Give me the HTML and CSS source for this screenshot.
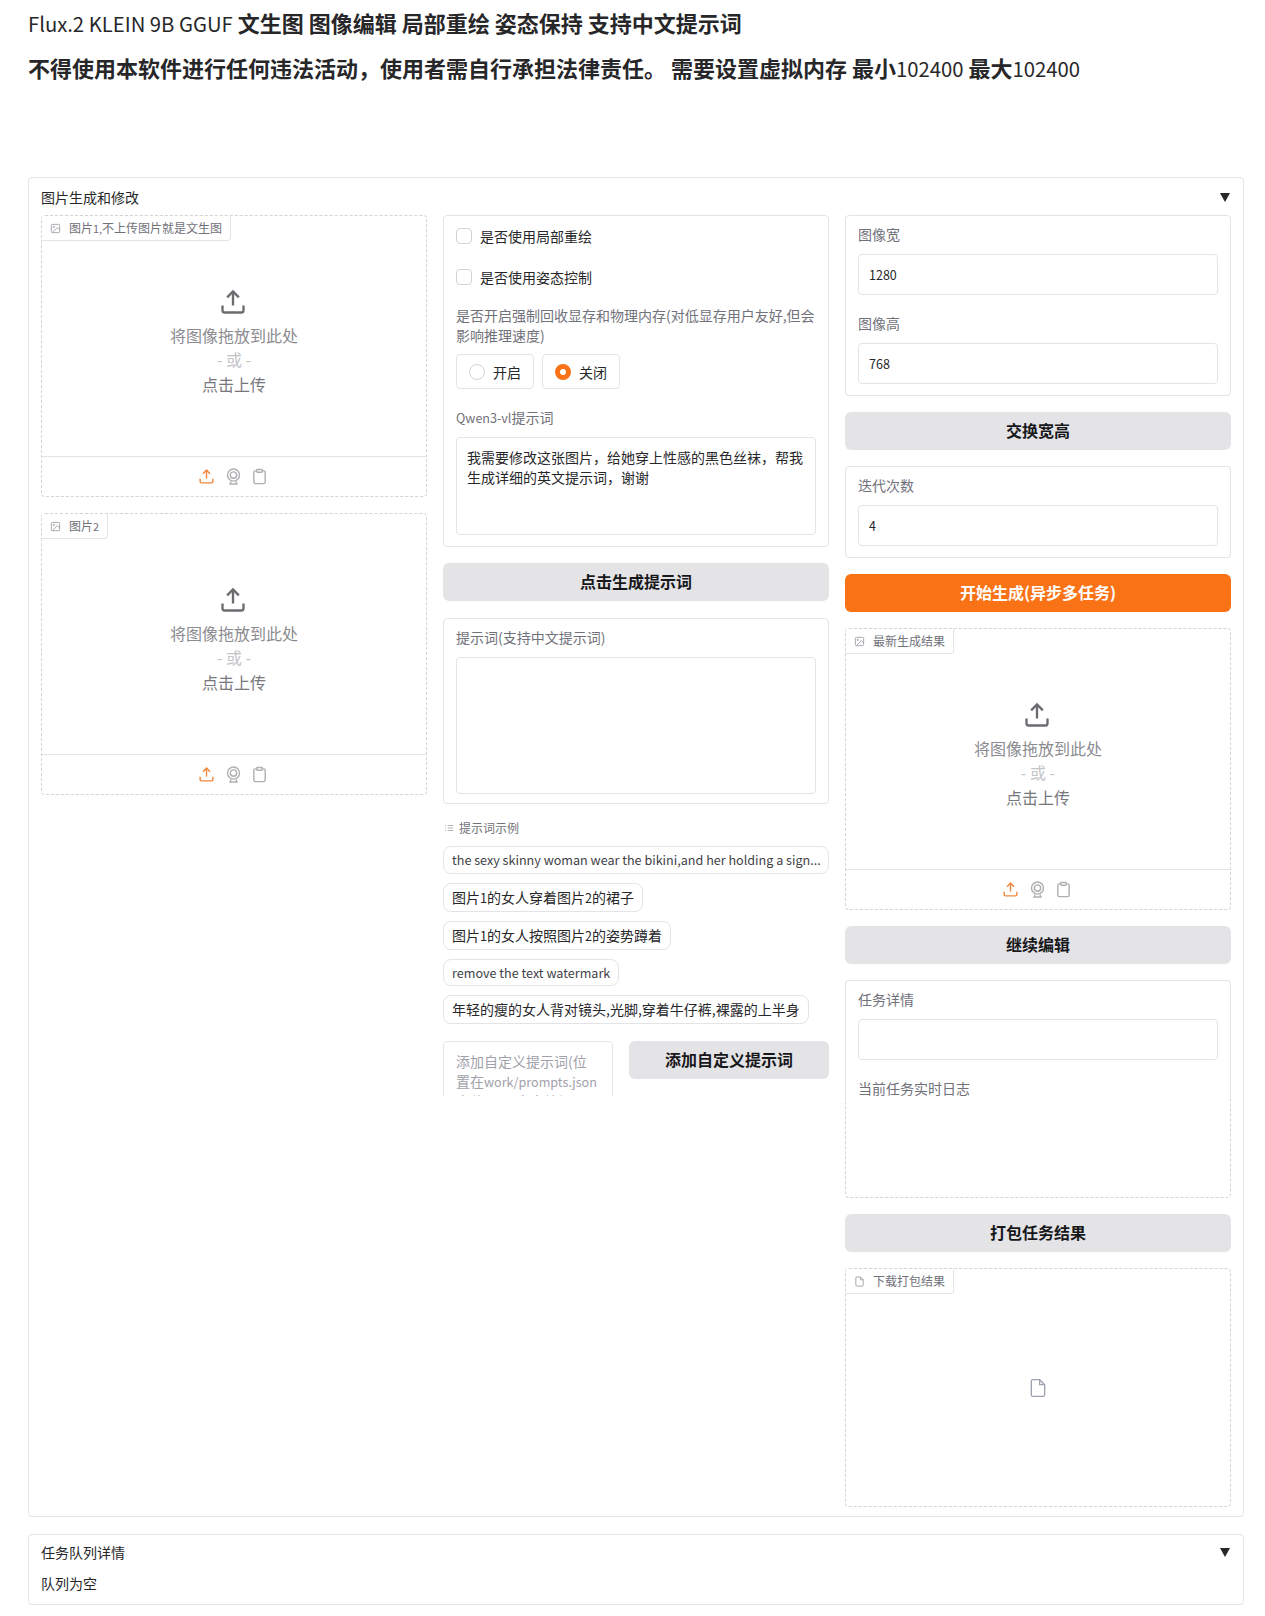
FILE: index.html
```html
<!DOCTYPE html>
<html lang="zh-CN">
<head>
  <meta charset="UTF-8" />
  <title>Flux.2 KLEIN 9B GGUF</title>
  <link rel="stylesheet" href="styles.css">
</head>
<body>

  <h2 class="title"><span class="plain">Flux.2 KLEIN 9B GGUF</span> 文生图 图像编辑 局部重绘 姿态保持 支持中文提示词</h2>
  <h2 class="title">不得使用本软件进行任何违法活动，使用者需自行承担法律责任。 需要设置虚拟内存 最小<span class="plain">102400</span> 最大<span class="plain">102400</span></h2>

  <section class="accordion main">
    <div class="accordion-head"><span>图片生成和修改</span><span class="arrow"></span></div>

    <div class="columns">
      <div class="column">
        <div class="upload">
          <div class="tab">
            <svg class="tab-icon" viewBox="0 0 24 24"><rect x="3" y="3" width="18" height="18" rx="2"/><circle cx="8.5" cy="8.5" r="1.5"/><path d="M21 15l-5-5L5 21"/></svg>
            <span>图片<span class="lat">1,</span>不上传图片就是文生图</span>
          </div>
          <div class="drop">
            <svg class="drop-icon" viewBox="0 0 24 24"><path d="M21 15v4a2 2 0 0 1-2 2H5a2 2 0 0 1-2-2v-4"/><path d="M17 8l-5-5-5 5"/><path d="M12 3v12"/></svg>
            <div class="drop-text">将图像拖放到此处</div>
            <div class="drop-or">- 或 -</div>
            <div class="drop-click">点击上传</div>
          </div>
          <div class="toolbar">
            <svg class="tool active" viewBox="0 0 24 24"><path d="M21 15v4a2 2 0 0 1-2 2H5a2 2 0 0 1-2-2v-4"/><path d="M17 8l-5-5-5 5"/><path d="M12 3v12"/></svg>
            <svg class="tool" viewBox="0 0 24 24"><circle cx="12" cy="10" r="8.5"/><circle cx="12" cy="10" r="4.5"/><path d="M6 22.5h12M8 19v3.5M16 19v3.5"/></svg>
            <svg class="tool" viewBox="0 0 24 24"><path d="M16 4h2a2 2 0 0 1 2 2v14a2 2 0 0 1-2 2H6a2 2 0 0 1-2-2V6a2 2 0 0 1 2-2h2"/><rect x="8" y="2" width="8" height="4" rx="1"/></svg>
          </div>
        </div>

        <div class="upload">
          <div class="tab">
            <svg class="tab-icon" viewBox="0 0 24 24"><rect x="3" y="3" width="18" height="18" rx="2"/><circle cx="8.5" cy="8.5" r="1.5"/><path d="M21 15l-5-5L5 21"/></svg>
            <span>图片<span class="lat">2</span></span>
          </div>
          <div class="drop">
            <svg class="drop-icon" viewBox="0 0 24 24"><path d="M21 15v4a2 2 0 0 1-2 2H5a2 2 0 0 1-2-2v-4"/><path d="M17 8l-5-5-5 5"/><path d="M12 3v12"/></svg>
            <div class="drop-text">将图像拖放到此处</div>
            <div class="drop-or">- 或 -</div>
            <div class="drop-click">点击上传</div>
          </div>
          <div class="toolbar">
            <svg class="tool active" viewBox="0 0 24 24"><path d="M21 15v4a2 2 0 0 1-2 2H5a2 2 0 0 1-2-2v-4"/><path d="M17 8l-5-5-5 5"/><path d="M12 3v12"/></svg>
            <svg class="tool" viewBox="0 0 24 24"><circle cx="12" cy="10" r="8.5"/><circle cx="12" cy="10" r="4.5"/><path d="M6 22.5h12M8 19v3.5M16 19v3.5"/></svg>
            <svg class="tool" viewBox="0 0 24 24"><path d="M16 4h2a2 2 0 0 1 2 2v14a2 2 0 0 1-2 2H6a2 2 0 0 1-2-2V6a2 2 0 0 1 2-2h2"/><rect x="8" y="2" width="8" height="4" rx="1"/></svg>
          </div>
        </div>
      </div>

      <div class="column">
        <div class="card">
          <label class="check"><span class="box"></span>是否使用局部重绘</label>
          <label class="check second"><span class="box"></span>是否使用姿态控制</label>
          <div class="label after-check">是否开启强制回收显存和物理内存(对低显存用户友好,但会影响推理速度)</div>
          <div class="radios">
            <label class="radio"><span class="dot"></span>开启</label>
            <label class="radio"><span class="dot on"></span>关闭</label>
          </div>
          <div class="label spaced"><span class="lat">Qwen3-vl</span>提示词</div>
          <textarea class="text-area short">我需要修改这张图片，给她穿上性感的黑色丝袜，帮我生成详细的英文提示词，谢谢</textarea>
        </div>

        <button class="btn">点击生成提示词</button>

        <div class="card prompt-card">
          <div class="label">提示词(支持中文提示词)</div>
          <textarea class="text-area tall"></textarea>
        </div>

        <div>
          <div class="examples-head">
            <svg class="list-icon" viewBox="0 0 24 24"><path d="M9 6h13M9 12h13M9 18h13M3 6h2M3 12h2M3 18h2"/></svg>
            提示词示例
          </div>
          <div class="pills">
            <div class="pill latin wide"><span class="lat">the sexy skinny woman wear the bikini,and her holding a sign...</span></div>
            <div class="pill">图片<span class="lat">1</span>的女人穿着图片<span class="lat">2</span>的裙子</div>
            <div class="pill">图片<span class="lat">1</span>的女人按照图片<span class="lat">2</span>的姿势蹲着</div>
            <div class="pill latin"><span class="lat">remove the text watermark</span></div>
            <div class="pill">年轻的瘦的女人背对镜头,光脚,穿着牛仔裤,裸露的上半身</div>
          </div>
        </div>

        <div class="add-row">
          <div class="clip">
            <div class="add-input">添加自定义提示词(位置在<span class="lat">work/prompts.json</span>文件,可以自由编辑)</div>
          </div>
          <button class="btn add-btn">添加自定义提示词</button>
        </div>
      </div>

      <div class="column">
        <div class="card">
          <div class="label">图像宽</div>
          <input class="field" type="text" value="1280" />
          <div class="label spaced">图像高</div>
          <input class="field" type="text" value="768" />
        </div>

        <button class="btn">交换宽高</button>

        <div class="card">
          <div class="label">迭代次数</div>
          <input class="field" type="text" value="4" />
        </div>

        <button class="btn primary">开始生成(异步多任务)</button>

        <div class="upload">
          <div class="tab">
            <svg class="tab-icon" viewBox="0 0 24 24"><rect x="3" y="3" width="18" height="18" rx="2"/><circle cx="8.5" cy="8.5" r="1.5"/><path d="M21 15l-5-5L5 21"/></svg>
            <span>最新生成结果</span>
          </div>
          <div class="drop">
            <svg class="drop-icon" viewBox="0 0 24 24"><path d="M21 15v4a2 2 0 0 1-2 2H5a2 2 0 0 1-2-2v-4"/><path d="M17 8l-5-5-5 5"/><path d="M12 3v12"/></svg>
            <div class="drop-text">将图像拖放到此处</div>
            <div class="drop-or">- 或 -</div>
            <div class="drop-click">点击上传</div>
          </div>
          <div class="toolbar">
            <svg class="tool active" viewBox="0 0 24 24"><path d="M21 15v4a2 2 0 0 1-2 2H5a2 2 0 0 1-2-2v-4"/><path d="M17 8l-5-5-5 5"/><path d="M12 3v12"/></svg>
            <svg class="tool" viewBox="0 0 24 24"><circle cx="12" cy="10" r="8.5"/><circle cx="12" cy="10" r="4.5"/><path d="M6 22.5h12M8 19v3.5M16 19v3.5"/></svg>
            <svg class="tool" viewBox="0 0 24 24"><path d="M16 4h2a2 2 0 0 1 2 2v14a2 2 0 0 1-2 2H6a2 2 0 0 1-2-2V6a2 2 0 0 1 2-2h2"/><rect x="8" y="2" width="8" height="4" rx="1"/></svg>
          </div>
        </div>

        <button class="btn">继续编辑</button>

        <div>
          <div class="status-top">
            <div class="label">任务详情</div>
            <input class="field" type="text" value="" />
            <div class="label spaced">当前任务实时日志</div>
          </div>
          <div class="status-log"></div>
        </div>

        <button class="btn">打包任务结果</button>

        <div class="upload file">
          <div class="tab">
            <svg class="tab-icon" viewBox="0 0 24 24"><path d="M14 2H6a2 2 0 0 0-2 2v16a2 2 0 0 0 2 2h12a2 2 0 0 0 2-2V8z"/><path d="M14 2v6h6"/></svg>
            <span>下载打包结果</span>
          </div>
          <svg class="file-icon" viewBox="0 0 24 24"><path d="M14 2H6a2 2 0 0 0-2 2v16a2 2 0 0 0 2 2h12a2 2 0 0 0 2-2V8z"/><path d="M14 2v6h6"/></svg>
        </div>
      </div>
    </div>
  </section>

  <section class="accordion queue">
    <div class="accordion-head"><span>任务队列详情</span><span class="arrow"></span></div>
    <div class="queue-text">队列为空</div>
  </section>

</body>
</html>
```

FILE: styles.css
```css
* {
  box-sizing: border-box;
}

body {
  margin: 0;
  padding: 6px 21px 11px 28px;
  background: #fff;
  color: #27272a;
  font-family: "Noto Sans CJK SC", "Noto Sans", sans-serif;
  font-size: 14px;
  line-height: 20px;
}

.title {
  margin: 0 0 12px;
  font-size: 22px;
  line-height: 33px;
  font-weight: 700;
}

.plain {
  font-size: 20.3px;
  font-weight: 400;
  line-height: 1;
}

/* latin runs are set a bit smaller than the cjk font's own latin */
.lat {
  font-size: 0.9em;
  line-height: 1;
}

.accordion {
  border: 1px solid #e4e4e7;
  border-radius: 4px;
  padding: 9px 12px;
}

.main {
  margin-top: 93px;
  height: 1340px;
}

.queue {
  margin-top: 17px;
  height: 71px;
  padding-top: 7px;
}

.accordion-head {
  display: flex;
  justify-content: space-between;
  align-items: center;
  height: 20px;
  line-height: 18px;
}

.arrow {
  width: 0;
  height: 0;
  margin-right: 1px;
  border-left: 5px solid transparent;
  border-right: 5px solid transparent;
  border-top: 9px solid #27272a;
}

.queue-text {
  margin-top: 11px;
}

.columns {
  display: grid;
  grid-template-columns: repeat(3, 1fr);
  gap: 16px;
  margin-top: 8px;
}

.column {
  display: flex;
  flex-direction: column;
  gap: 16px;
  min-width: 0;
}

.card {
  border: 1px solid #e4e4e7;
  border-radius: 4px;
  padding: 9px 12px 11px;
}

.prompt-card {
  margin-top: 1px;
  padding-bottom: 9px;
}

.status-top {
  padding: 9px 12px 0;
  border: 1px solid #e4e4e7;
  border-bottom: none;
  border-radius: 4px 4px 0 0;
}

.status-log {
  height: 99px;
  border: 1px dashed #d4d4d8;
  border-top: none;
  border-radius: 0 0 4px 4px;
}

.label {
  color: #71717a;
  line-height: 18px;
}

.label.spaced {
  margin-top: 19px;
}

.status-top .label.spaced {
  height: 20px;
}

.field,
.text-area {
  display: block;
  width: 100%;
  margin-top: 11px;
  border: 1px solid #e4e4e7;
  border-radius: 4px;
  background: #fff;
  color: #27272a;
  font: inherit;
  resize: none;
  outline: none;
}

.field {
  height: 41px;
  padding: 0 10px;
  font-size: 12.5px;
}

.text-area {
  padding: 9px 10px;
}

.short {
  height: 98px;
}

.tall {
  height: 137px;
}

.check {
  display: flex;
  align-items: center;
  gap: 8px;
  margin-top: 1px;
  height: 20px;
}

.check.second {
  margin-top: 21px;
}

.box {
  width: 16px;
  height: 16px;
  border: 1px solid #d4d4d8;
  border-radius: 4px;
}

.label.after-check {
  margin-top: 18px;
  line-height: 20px;
}

.radios {
  display: flex;
  gap: 8px;
  margin-top: 9px;
}

.radio {
  display: flex;
  align-items: center;
  gap: 8px;
  width: 78px;
  height: 35px;
  padding-left: 12px;
  border: 1px solid #e4e4e7;
  border-radius: 4px;
}

.dot {
  width: 16px;
  height: 16px;
  border: 1px solid #d4d4d8;
  border-radius: 50%;
}

.dot.on {
  border: 5px solid #f97316;
  background: #fff;
}

.btn {
  height: 38px;
  padding: 0 0 2px;
  border: none;
  border-radius: 6px;
  background: #e4e4e7;
  color: #18181b;
  font: inherit;
  font-size: 16px;
  font-weight: 700;
}

.btn.primary {
  background: #f97316;
  color: #fff;
}

.upload {
  position: relative;
  display: flex;
  flex-direction: column;
  height: 282px;
  border: 1px dashed #d4d4d8;
  border-radius: 4px;
}

.upload.file {
  height: 239px;
  align-items: center;
  justify-content: center;
}

.tab {
  position: absolute;
  top: 0;
  left: 0;
  display: flex;
  align-items: center;
  gap: 8px;
  height: 25px;
  padding: 0 8px;
  border: 1px solid #e4e4e7;
  border-top: none;
  border-left: none;
  border-radius: 0 0 4px 0;
  background: #fff;
  color: #71717a;
  font-size: 12px;
}

.tab-icon {
  width: 11px;
  height: 11px;
  fill: none;
  stroke: #a1a1aa;
  stroke-width: 2;
}

.drop {
  flex: 1;
  display: flex;
  flex-direction: column;
  align-items: center;
  padding-top: 72px;
  font-size: 16px;
  line-height: 24.5px;
}

.drop-icon {
  width: 28px;
  height: 28px;
  margin: 0 3px 7px 0;
  fill: none;
  stroke: #6b6b70;
  stroke-width: 2;
}

.drop-text {
  color: #8b8b90;
}

.drop-or {
  margin-bottom: 2.5px;
  color: #c4c4c8;
  line-height: 22px;
}

.drop-click {
  color: #77777c;
}

.toolbar {
  display: flex;
  justify-content: center;
  align-items: center;
  gap: 9.5px;
  padding-right: 2px;
  height: 40px;
  border-top: 1px solid #e4e4e7;
}

.tool {
  width: 17px;
  height: 17px;
  fill: none;
  stroke: #b0b0b4;
  stroke-width: 2;
}

.tool.active {
  stroke: #f0883e;
}

.file-icon {
  width: 20px;
  height: 20px;
  fill: none;
  stroke: #9ca3af;
  stroke-width: 1.6;
}

.examples-head {
  display: flex;
  align-items: center;
  gap: 5px;
  padding-left: 1px;
  color: #71717a;
  font-size: 12px;
  line-height: 16px;
}

.list-icon {
  width: 10px;
  height: 10px;
  fill: none;
  stroke: #a1a1aa;
  stroke-width: 2;
}

.pills {
  display: flex;
  flex-direction: column;
  align-items: flex-start;
  gap: 9px;
  margin-top: 10px;
}

.pill {
  padding: 0 8px;
  height: 29px;
  line-height: 27px;
  border: 1px solid #e4e4e7;
  border-radius: 8px;
  white-space: nowrap;
}

.pill.latin {
  height: 27.5px;
  line-height: 25.5px;
  color: #3f3f46;
}

.pill.wide {
  width: 100%;
}

.add-row {
  display: flex;
  gap: 16px;
  align-items: flex-start;
  margin-top: 1px;
}

.clip {
  flex: 0 0 170px;
  height: 55px;
  overflow: hidden;
}

.add-input {
  height: 90px;
  padding: 9px 12px;
  border: 1px solid #e4e4e7;
  border-radius: 4px;
  color: #a1a1aa;
}

.add-btn {
  flex: 1;
}
```
